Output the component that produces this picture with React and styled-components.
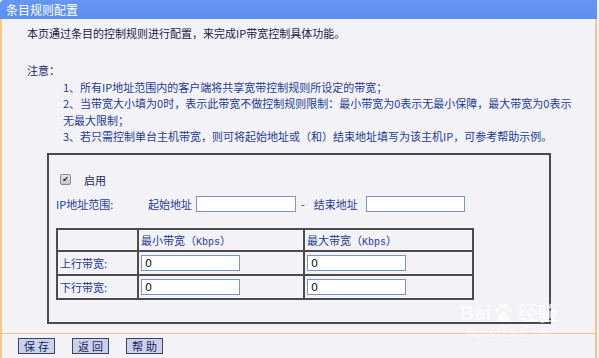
import React from "react";
import styled, { createGlobalStyle } from "styled-components";

const GlobalStyle = createGlobalStyle`
    html, body {
        margin: 0;
        padding: 0;
        background: #f3f2f6;
    }
    body {
        font-family: "Noto Sans CJK SC", "DejaVu Sans", sans-serif;
        font-size: 11px;
    }
`;

const notes = [
    "1、所有IP地址范围内的客户端将共享宽带控制规则所设定的带宽；",
    "2、当带宽大小填为0时，表示此带宽不做控制规则限制：最小带宽为0表示无最小保障，最大带宽为0表示",
    "无最大限制；",
    "3、若只需控制单台主机带宽，则可将起始地址或（和）结束地址填写为该主机IP，可参考帮助示例。",
];

const rows = [
    { label: "上行带宽:", min: "0", max: "0" },
    { label: "下行带宽:", min: "0", max: "0" },
];

export default function App() {
    return (
        <Page>
            <GlobalStyle />
            <Frame>
                <Header>条目规则配置</Header>
                <Body>
                    <Content>
                        <Intro>本页通过条目的控制规则进行配置，来完成IP带宽控制具体功能。</Intro>
                        <Notes>
                            <NoteTitle>注意：</NoteTitle>
                            {notes.map((n, i) => (
                                <NoteLine key={i}>{n}</NoteLine>
                            ))}
                        </Notes>
                        <RuleBox>
                            <CheckRow>
                                <FakeCheck>✔</FakeCheck>
                                <CheckLabel>启用</CheckLabel>
                            </CheckRow>
                            <IpRow>
                                <FieldLabel $width={92}>IP地址范围:</FieldLabel>
                                <FieldLabel>起始地址</FieldLabel>
                                <TextInput $width={100} $ml={4} defaultValue="" />
                                <Dash>-</Dash>
                                <FieldLabel>结束地址</FieldLabel>
                                <TextInput $width={99} $ml={8} defaultValue="" />
                            </IpRow>
                            <BandTable>
                                <colgroup>
                                    <col style={{ width: 81 }} />
                                    <col style={{ width: 166 }} />
                                    <col style={{ width: 169 }} />
                                </colgroup>
                                <tbody>
                                    <HeadRow>
                                        <Cell></Cell>
                                        <Cell>
                                            最小带宽（<Mono>Kbps</Mono>）
                                        </Cell>
                                        <Cell>
                                            最大带宽（<Mono>Kbps</Mono>）
                                        </Cell>
                                    </HeadRow>
                                    {rows.map((r) => (
                                        <BodyRow key={r.label}>
                                            <Cell>{r.label}</Cell>
                                            <Cell>
                                                <TextInput $width={99} defaultValue={r.min} />
                                            </Cell>
                                            <Cell>
                                                <TextInput $width={99} defaultValue={r.max} />
                                            </Cell>
                                        </BodyRow>
                                    ))}
                                </tbody>
                            </BandTable>
                        </RuleBox>
                    </Content>
                    <Footer>
                        <ActionButton>保存</ActionButton>
                        <ActionButton>返回</ActionButton>
                        <ActionButton>帮助</ActionButton>
                    </Footer>
                    <Watermark>
                        <WmLogo>
                            Bai
                            <Paw viewBox="0 0 24 24">
                                <circle cx="6" cy="9" r="2.6" />
                                <circle cx="10" cy="4.5" r="2.6" />
                                <circle cx="15" cy="4.5" r="2.6" />
                                <circle cx="19" cy="9" r="2.6" />
                                <path d="M12.5 10c-3 0-7 5-7 8.5 0 2.5 2 3.5 4 3 1.5-.4 2-.6 3-.6s1.5.2 3 .6c2 .5 4-.5 4-3 0-3.5-4-8.5-7-8.5z" />
                            </Paw>
                            经验
                        </WmLogo>
                        <WmUrl>jingyan.baidu.com</WmUrl>
                    </Watermark>
                </Body>
            </Frame>
        </Page>
    );
}

const Page = styled.div`
    width: 599px;
    height: 358px;
    overflow: hidden;
    background: #f3f2f6;
`;

const Frame = styled.div`
    width: 597px;
    height: 358px;
    display: flex;
    flex-direction: column;
`;

const Header = styled.div`
    height: 19px;
    line-height: 19px;
    padding-left: 6px;
    font-size: 12px;
    color: #ffffff;
    background: linear-gradient(180deg, #6797f3 0%, #5a8ef0 100%);
    border-top-left-radius: 4px;
`;

const Body = styled.div`
    position: relative;
    flex: 1;
    display: flex;
    flex-direction: column;
    border-left: 2px solid #f3c68c;
    border-right: 2px solid #f3c68c;
`;

const Content = styled.div`
    padding: 6px 0 0 25px;
    height: 314px;
    box-sizing: border-box;
`;

const Intro = styled.div`
    line-height: 16px;
    color: #1a1d45;
    white-space: nowrap;
`;

const Notes = styled.div`
    margin-top: 21px;
    line-height: 16.5px;
    color: #1e3c96;
`;

const NoteTitle = styled.div`
    color: #1b2a66;
`;

const NoteLine = styled.div`
    padding-left: 36px;
    white-space: nowrap;
`;

const RuleBox = styled.div`
    margin: 8px 0 0 20px;
    width: 504px;
    height: 171px;
    box-sizing: border-box;
    border: 2px solid #4a4a4a;
    padding: 18px 0 0 7px;
`;

const CheckRow = styled.div`
    display: flex;
    align-items: center;
    height: 14px;
    padding-left: 4px;
`;

const FakeCheck = styled.span`
    width: 9px;
    height: 9px;
    border: 1px solid #8a8a8a;
    border-radius: 2px;
    background: linear-gradient(180deg, #e8e8e8, #c4c4c4);
    color: #222;
    font-size: 8px;
    line-height: 9px;
    text-align: center;
    font-family: "DejaVu Sans", sans-serif;
`;

const CheckLabel = styled.span`
    margin-left: 13px;
    color: #1b2a66;
`;

const IpRow = styled.div`
    margin-top: 9px;
    display: flex;
    align-items: center;
    height: 16px;
    color: #1e3c96;
`;

const FieldLabel = styled.span`
    display: inline-block;
    width: ${(p) => (p.$width ? `${p.$width}px` : "auto")};
    white-space: nowrap;
`;

const Dash = styled.span`
    margin: 0 9px 0 5px;
`;

const TextInput = styled.input`
    width: ${(p) => p.$width}px;
    height: 16px;
    margin-left: ${(p) => p.$ml || 0}px;
    box-sizing: border-box;
    border: 1px solid #7a95bf;
    background: #ffffff;
    padding: 0 0 0 3px;
    font-family: "DejaVu Sans", sans-serif;
    font-size: 11px;
    color: #111;
    outline: none;
`;

const BandTable = styled.table`
    margin-top: 16px;
    width: 416px;
    border-collapse: collapse;
    table-layout: fixed;
    color: #1e3c96;
`;

const HeadRow = styled.tr`
    height: 22px;
`;

const BodyRow = styled.tr`
    height: 24px;
`;

const Cell = styled.td`
    border: 2px solid #4c4c4c;
    padding: 0 0 0 2px;
    white-space: nowrap;
`;

const Mono = styled.span`
    font-family: "Liberation Mono", monospace;
    font-size: 10px;
`;

const Footer = styled.div`
    flex: 1;
    display: flex;
    gap: 17px;
    align-items: flex-start;
    padding: 4px 0 0 16px;
    border-top: 1px solid #f0c488;
`;

const ActionButton = styled.button`
    width: 37px;
    height: 16px;
    padding: 0;
    box-sizing: border-box;
    border: 1px solid #3d4266;
    background: #c9d1ec;
    color: #1b2456;
    font-family: "Noto Sans CJK SC", sans-serif;
    font-size: 11px;
    letter-spacing: 3px;
    text-indent: 3px;
    line-height: 14px;
    cursor: pointer;
`;

const Watermark = styled.div`
    position: absolute;
    left: 458px;
    top: 283px;
    color: rgba(255, 255, 255, 0.7);
    pointer-events: none;
    text-align: center;
`;

const WmLogo = styled.div`
    display: flex;
    align-items: flex-end;
    font-family: "Liberation Sans", sans-serif;
    font-weight: bold;
    font-size: 20px;
    line-height: 21px;
`;

const Paw = styled.svg`
    width: 22px;
    height: 22px;
    fill: rgba(255, 255, 255, 0.7);
    margin: 0 4px 0 1px;
`;

const WmUrl = styled.div`
    font-family: "Liberation Sans", sans-serif;
    font-size: 10px;
    letter-spacing: 0.3px;
    margin-top: 4px;
`;
